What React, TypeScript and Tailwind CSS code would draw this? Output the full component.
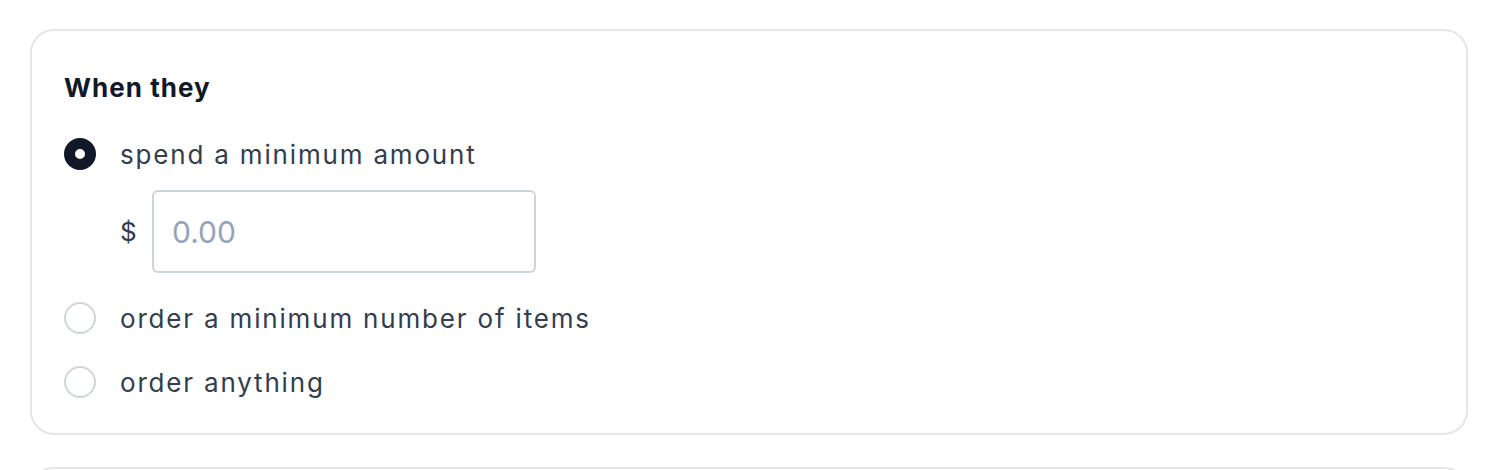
import React, { useState } from "react";

type Option = { id: string; label: string };

const options: Option[] = [
  { id: "amount", label: "spend a minimum amount" },
  { id: "items", label: "order a minimum number of items" },
  { id: "anything", label: "order anything" },
];

function Radio({ checked }: { checked: boolean }) {
  return checked ? (
    <span className="block h-[32px] w-[32px] shrink-0 rounded-full border-[11px] border-[#111827] bg-white" />
  ) : (
    <span className="block h-[32px] w-[32px] shrink-0 rounded-full border-2 border-[#d1d5db] bg-white" />
  );
}

export default function App() {
  const [selected, setSelected] = useState("amount");
  const [amount, setAmount] = useState("");

  return (
    <div
      className="min-h-screen bg-white pt-[29px] pl-[30px]"
      style={{ fontFamily: "Inter, 'Noto Sans', sans-serif" }}
    >
      <div className="w-[1438px] rounded-[24px] border-2 border-[#e4e4e9] bg-white px-[32px] pt-[41px] pb-[31px]">
        <h3 className="h-[32px] text-[26px] font-bold leading-[32px] tracking-[0.04em] text-[#111827]">
          When they
        </h3>

        <div className="mt-[30px] flex flex-col">
          {options.map((opt, i) => (
            <div key={opt.id} className={i === 0 ? "" : i === 1 ? "mt-[25px]" : "mt-[24px]"}>
              <label
                className="flex h-[40px] cursor-pointer items-center gap-[24px]"
                onClick={() => setSelected(opt.id)}
              >
                <Radio checked={selected === opt.id} />
                <span className="text-[26px] tracking-[0.07em] text-[#333d4d]">{opt.label}</span>
              </label>
              {opt.id === "amount" && selected === "amount" && (
                <div className="mt-[16px] flex items-center pl-[56px]">
                  <span className="w-[32px] text-[26px] text-[#333d4d]">$</span>
                  <input
                    value={amount}
                    onChange={(e) => setAmount(e.target.value)}
                    placeholder="0.00"
                    className="h-[83px] w-[384px] rounded-[6px] border-2 border-[#cbd5e1] px-[18px] text-[30px] text-[#333d4d] placeholder:text-[#94a3b8] outline-none"
                  />
                </div>
              )}
            </div>
          ))}
        </div>
      </div>

      <div className="mt-[32px] h-[120px] w-[1438px] rounded-[24px] border-2 border-[#e4e4e9] bg-white" />
    </div>
  );
}
